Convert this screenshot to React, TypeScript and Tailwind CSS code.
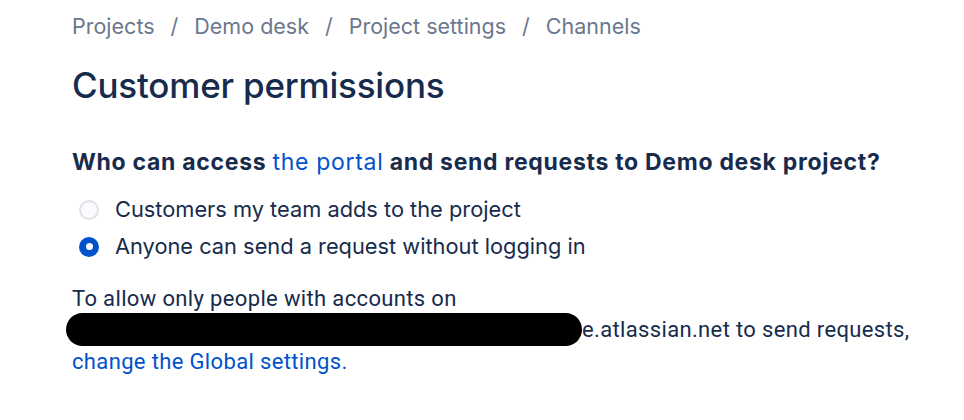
const crumbs = ['Projects', 'Demo desk', 'Project settings', 'Channels'];

const Radio = ({ checked, label }: { checked: boolean; label: string }) => (
  <label className="flex items-center gap-[16px] h-[37px]">
    <span
      className={`flex items-center justify-center w-[20px] h-[20px] rounded-full ml-[7px] ${
        checked ? 'bg-[#0052CC]' : 'bg-[#FAFBFC] border-[2px] border-[#DFE1E6]'
      }`}
    >
      {checked && <span className="w-[7px] h-[7px] rounded-full bg-white" />}
    </span>
    <span className="text-[21.8px] text-[#172B4D]">{label}</span>
  </label>
);

export default function App() {
  return (
    <div
      className="w-[964px] h-[420px] bg-white pl-[72px] pt-[10px]"
      style={{ fontFamily: 'Inter, "Noto Sans", sans-serif' }}
    >
      {/* Breadcrumbs */}
      <nav className="flex items-center h-[32px] text-[21.5px] text-[#6B778C]">
        {crumbs.map((c, i) => (
          <span key={c} className="flex items-center">
            {i > 0 && <span className="mx-[16px]">/</span>}
            <span>{c}</span>
          </span>
        ))}
      </nav>

      <h1 className="mt-[21px] text-[35px] font-medium leading-[44px] tracking-[-0.2px] text-[#172B4D]">
        Customer permissions
      </h1>

      <h3 className="mt-[39px] text-[23px] font-bold leading-[32px] tracking-[0.7px] text-[#172B4D]">
        Who can access <span className="font-normal text-[#0052CC]">the portal</span> and send requests to
        Demo desk project?
      </h3>

      <div className="mt-[13px] flex flex-col">
        <Radio checked={false} label="Customers my team adds to the project" />
        <Radio checked label="Anyone can send a request without logging in" />
      </div>

      <p
        className="mt-[18px] text-[22px] leading-[31px] text-[#172B4D] tracking-[0.35px] w-[880px]"
        style={{ fontFamily: 'Roboto, "Liberation Sans", sans-serif' }}
      >
        To allow only people with accounts on
        <br />
        <span className="inline-block align-middle ml-[-6px] mt-[-4px] w-[516px] h-[33px] rounded-full bg-black" />
        e.atlassian.net to send requests,
        <br />
        <a className="text-[#0052CC]">change the Global settings.</a>
      </p>
    </div>
  );
}
